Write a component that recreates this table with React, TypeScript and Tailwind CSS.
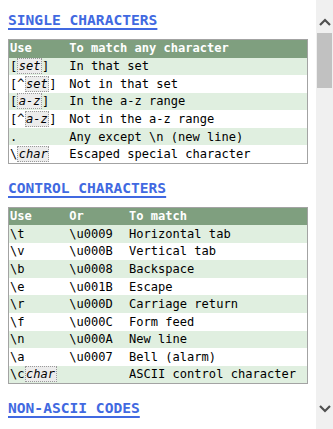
import React from "react";

type Cell = React.ReactNode;

const mono = "font-['DejaVu_Sans_Mono','Liberation_Mono',monospace]";

function Arg({ children }: { children: React.ReactNode }) {
  return (
    <span className="inline-block italic bg-[#ececec] border border-dotted border-[#9a9a9a] px-[0.5px] leading-[14px]">
      {children}
    </span>
  );
}

function Title({ children }: { children: React.ReactNode }) {
  return (
    <h2 className="text-[14.6px] leading-[18px] font-bold text-[#4169e1] underline decoration-2 underline-offset-[3px]">
      {children}
    </h2>
  );
}

function Table({ head, rows, widths }: { head: string[]; rows: Cell[][]; widths: string[] }) {
  return (
    <table className="w-full border-collapse border border-[#a3a3a3] table-fixed mt-[10px]">
      <colgroup>
        {widths.map((w, i) => (
          <col key={i} className={w} />
        ))}
      </colgroup>
      <thead>
        <tr className="bg-[#7f9f7f] h-[18px]">
          {head.map((h) => (
            <th key={h} className="text-left font-bold text-white pl-[1px] p-0 leading-[17px]">
              {h}
            </th>
          ))}
        </tr>
      </thead>
      <tbody>
        {rows.map((r, i) => (
          <tr key={i} className={`h-[17.6px] ${i % 2 === 0 ? "bg-[#e0efe0]" : "bg-white"}`}>
            {r.map((c, j) => (
              <td key={j} className="pl-[1px] p-0 leading-[16px] whitespace-nowrap">
                {c}
              </td>
            ))}
          </tr>
        ))}
      </tbody>
    </table>
  );
}

function Scrollbar() {
  return (
    <div className="w-[17px] shrink-0 bg-[#f0f0f0] flex flex-col items-center">
      <svg width="12" height="8" viewBox="0 0 12 8" className="mt-[18px]">
        <path d="M1 7 L6 2 L11 7" fill="none" stroke="#505050" strokeWidth="2.2" />
      </svg>
      <div className="mt-[7px] w-[15px] h-[55px] bg-[#c1c1c1]" />
      <div className="flex-1" />
      <svg width="12" height="8" viewBox="0 0 12 8" className="mb-[16px]">
        <path d="M1 1 L6 6 L11 1" fill="none" stroke="#505050" strokeWidth="2.2" />
      </svg>
    </div>
  );
}

const single: Cell[][] = [
  [<>[<Arg>set</Arg>]</>, "In that set"],
  [<>[^<Arg>set</Arg>]</>, "Not in that set"],
  [<>[<Arg>a-z</Arg>]</>, "In the a-z range"],
  [<>[^<Arg>a-z</Arg>]</>, "Not in the a-z range"],
  [".", "Any except \\n (new line)"],
  [<>\<Arg>char</Arg></>, "Escaped special character"],
];

const control: Cell[][] = [
  ["\\t", "\\u0009", "Horizontal tab"],
  ["\\v", "\\u000B", "Vertical tab"],
  ["\\b", "\\u0008", "Backspace"],
  ["\\e", "\\u001B", "Escape"],
  ["\\r", "\\u000D", "Carriage return"],
  ["\\f", "\\u000C", "Form feed"],
  ["\\n", "\\u000A", "New line"],
  ["\\a", "\\u0007", "Bell (alarm)"],
  [<>\c<Arg>char</Arg></>, "", "ASCII control character"],
];

export default function App() {
  return (
    <div className={`${mono} flex h-screen overflow-hidden bg-white text-[12.05px] text-black`}>
      <main className="flex-1 min-w-0 px-2 pt-[11px]">
        <Title>SINGLE CHARACTERS</Title>
        <Table head={["Use", "To match any character"]} widths={["w-[20%]", "w-[80%]"]} rows={single} />

        <div className="mt-[15px]">
          <Title>CONTROL CHARACTERS</Title>
        </div>
        <Table head={["Use", "Or", "To match"]} widths={["w-[20%]", "w-[20%]", "w-[60%]"]} rows={control} />

        <div className="mt-[15px]">
          <Title>NON-ASCII CODES</Title>
        </div>
      </main>
      <Scrollbar />
    </div>
  );
}
